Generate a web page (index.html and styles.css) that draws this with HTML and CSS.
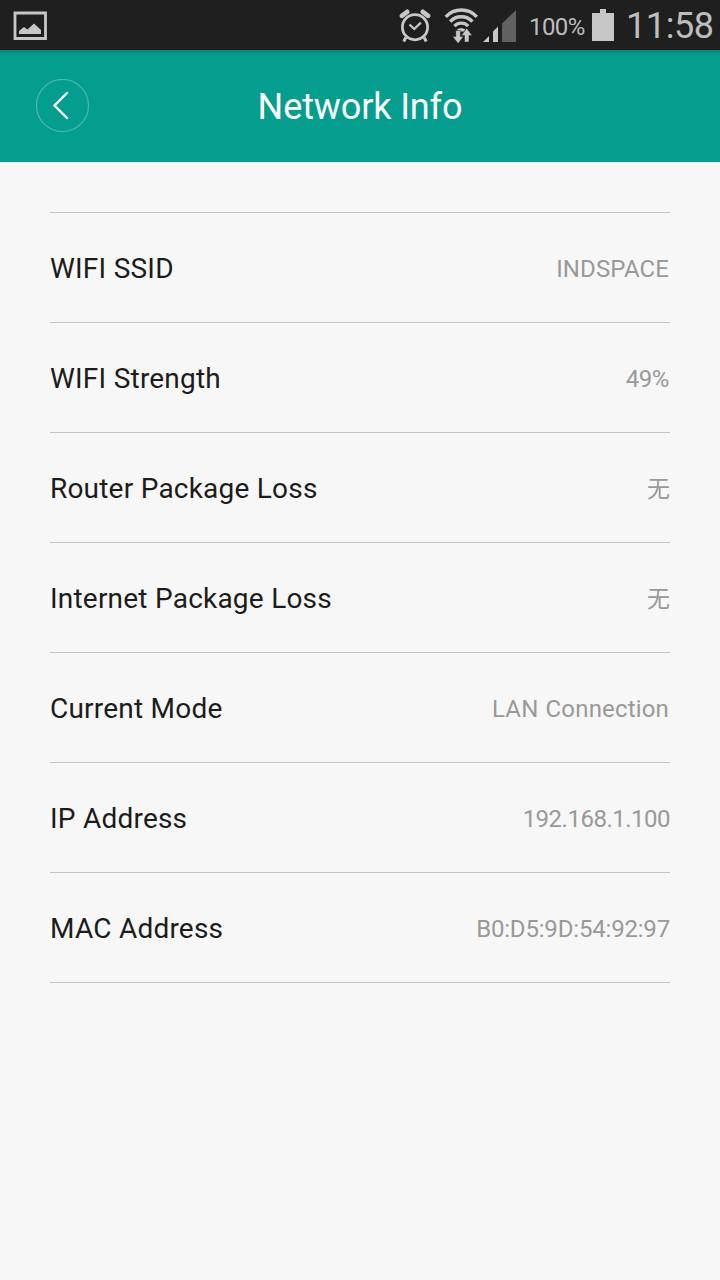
FILE: index.html
```html
<!DOCTYPE html>
<html lang="en">
<head>
<meta charset="utf-8">
<title>Network Info</title>
<link rel="stylesheet" href="styles.css">
</head>
<body>
<div class="status">
  <svg class="icon-picture" width="34" height="30" viewBox="13 11 34 30"><path d="M15 13h30.5v25.5H15z" fill="none" stroke="#c7c7c7" stroke-width="2.8"/><path d="M19 34v-3l5-4 3.5 2.5L34 23.5l7 6.5v4z" fill="#c7c7c7"/></svg>
  <div class="tray">
    <svg class="icon-alarm" width="32" height="34" viewBox="399 9 32 34" fill="none" stroke="#c7c7c7"><circle cx="415" cy="27.2" r="12.6" stroke-width="2.8"/><path d="M409.5 24.5l4.7 4.5 6.7-6.3" stroke-width="2.3"/><path d="M401.9 15.8l5.3-4M428.1 15.8l-5.3-4" stroke-width="4.6" stroke-linecap="round"/><path d="M405.8 37.5l-2 4M424.2 37.5l2 4" stroke-width="3"/></svg>
    <svg class="icon-wifi" width="36" height="36" viewBox="444 8 36 36"><g fill="none" stroke="#c7c7c7" stroke-width="3.4"><path d="M445.8 16.8a21 21 0 0 1 31 0"/><path d="M450.2 21.6a15 15 0 0 1 22.2 0"/><path d="M454.4 26.1a9.6 9.6 0 0 1 13.8 0"/></g><path d="M457 29.4q4.2-3 8.4 0l-1.5 2H458.500z" fill="#c7c7c7"/><path d="M455.8 30.5h4.6v6h3.2l-5.5 7-5.6-7h3.3zM464.500 42v-6.500h-3.200l5.400-7.300 5.500 7.300h-3.200V42z" fill="#c7c7c7" stroke="#1f1f1f" stroke-width=".5"/></svg>
    <svg class="icon-signal" width="34" height="34" viewBox="483 9 34 34"><path d="M483 42l6-6v6zM493 42V31.5l5-5V42z" fill="#c7c7c7"/><path d="M502 42V23.5L516 10v32z" fill="#616161"/></svg>
    <span class="percent">100%</span>
    <svg class="icon-battery" width="22" height="32" viewBox="0 0 22 32"><path d="M8 0h6v4h8v28H0V4h8z" fill="#c7c7c7"/></svg>
    <span class="clock">11:58</span>
  </div>
</div>
<header class="header">
  <svg class="back" width="54" height="54" viewBox="0 0 54 54" fill="none"><circle cx="26.5" cy="26.5" r="26" stroke="#4bb9ae" stroke-width="1.2"/><path d="M31 14L18.5 26.5 31 39" stroke="#fff" stroke-width="2.4" stroke-linecap="round"/></svg>
  <h1 class="title">Network Info</h1>
</header>
<main class="list">
  <div class="row"><span class="label">WIFI SSID</span><span class="value">INDSPACE</span></div>
  <div class="row"><span class="label">WIFI Strength</span><span class="value percent-value">49%</span></div>
  <div class="row"><span class="label">Router Package Loss</span><span class="value cjk">无</span></div>
  <div class="row"><span class="label">Internet Package Loss</span><span class="value cjk">无</span></div>
  <div class="row"><span class="label">Current Mode</span><span class="value mode">LAN Connection</span></div>
  <div class="row"><span class="label">IP Address</span><span class="value ip">192.168.1.100</span></div>
  <div class="row"><span class="label">MAC Address</span><span class="value mac">B0:D5:9D:54:92:97</span></div>
</main>
</body>
</html>
```

FILE: styles.css
```css
* { box-sizing: border-box; }
body {
  margin: 0;
  min-height: 1280px;
  background: #f7f7f7;
  font-family: Roboto, "Noto Sans CJK SC", sans-serif;
  color: #1c1c1c;
}
svg { display: block; flex: none; }
.status {
  height: 50px;
  padding: 0 7px 0 13px;
  display: flex;
  justify-content: space-between;
  align-items: center;
  background: #1f1f1f;
  color: #bdbdbd;
}
.tray { display: flex; align-items: center; height: 50px; }
.icon-picture { margin-top: 2px; }
.icon-alarm { margin: 2px 13px 0 0; }
.icon-wifi { margin: 2px 3px 0 0; }
.icon-signal { margin: 2px 12px 0 0; }
.percent { width: 57px; margin-right: 6px; padding-top: 3px; font-size: 24px; line-height: 30px; letter-spacing: -0.6px; }
.clock { width: 87px; margin-left: 12px; padding-top: 2px; font-size: 36px; line-height: 50px; font-weight: 400; letter-spacing: -0.4px; white-space: nowrap; }
.header {
  height: 112px;
  display: grid;
  grid-template-columns: 54px 1fr 54px;
  align-items: center;
  padding: 0 36px;
  background: linear-gradient(#058678 0, #059c8c 4px, #059d8d 7px);
}
.title { margin: 0; padding-top: 2px; text-align: center; font-size: 36px; line-height: 42px; font-weight: 400; letter-spacing: -0.12px; color: #fff; }
.list { margin: 50px 50px 0; border-top: 1px solid #c4c4c4; }
.row {
  height: 110px;
  display: flex;
  justify-content: space-between;
  align-items: center;
  border-bottom: 1px solid #c4c4c4;
}
.label { padding-top: 2px; font-size: 28px; line-height: 36px; letter-spacing: 0.2px; word-spacing: 0.2px; }
.value { padding: 2px 1px 0 0; font-size: 24px; line-height: 36px; letter-spacing: 0.1px; color: #999; }
.cjk { padding: 0 0 2px; font-family: "Noto Sans CJK SC", sans-serif; font-size: 23px; }
.percent-value { letter-spacing: -0.4px; }
.mode { letter-spacing: 0.17px; word-spacing: 1px; }
.ip { padding-right: 0; letter-spacing: -0.5px; }
.mac { padding-right: 0; letter-spacing: -0.18px; }
```
